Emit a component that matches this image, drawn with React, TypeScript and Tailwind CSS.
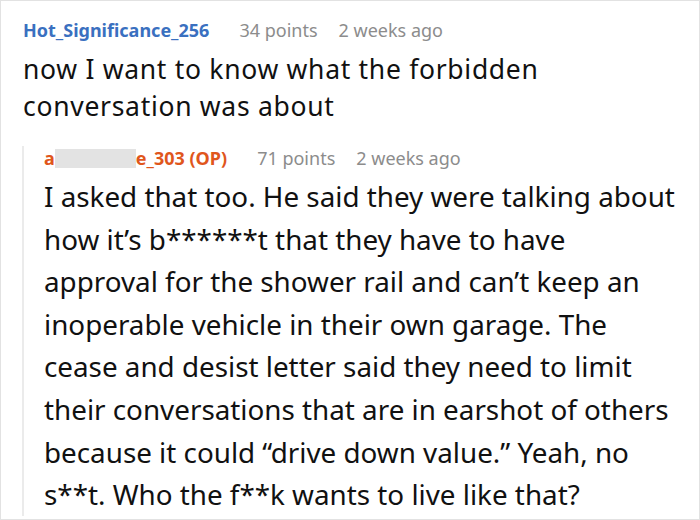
export default function App() {
  return (
    <div className="w-[700px] h-[520px] bg-white border border-[#e2e2e2] overflow-hidden" style={{ fontFamily: '"Noto Sans", sans-serif' }}>
      <div className="pl-[22px] pt-[17px]">
        <div className="flex items-baseline text-[18px] leading-[24px] whitespace-nowrap">
          <span className="font-bold text-[#3a70c0]">Hot_Significance_256</span>
          <span className="ml-[30px] text-[#8c8c8c]">34 points</span>
          <span className="ml-[21px] text-[#8c8c8c]">2 weeks ago</span>
        </div>
        <p className="text-[26.5px] leading-[37px] tracking-[0.7px] text-[#111] mt-[9px] whitespace-nowrap">
          now I want to know what the forbidden
          <br />
          conversation was about
        </p>
      </div>
      <div className="ml-[21px] mt-[21px] border-l-2 border-[#ebebeb] pl-[20px]">
        <div className="flex items-baseline text-[18px] leading-[24px] whitespace-nowrap">
          <span className="font-bold text-[#e0561c] flex items-baseline">
            a
            <span className="inline-block w-[81px] h-[19px] bg-[#e3e3e3] self-center"></span>
            e_303 (OP)
          </span>
          <span className="ml-[30px] text-[#8c8c8c]">71 points</span>
          <span className="ml-[21px] text-[#8c8c8c]">2 weeks ago</span>
        </div>
        <p className="text-[27.8px] leading-[42.6px] text-[#111] mt-[5px] whitespace-nowrap">
          I asked that too. He said they were talking about
          <br />
          how it’s b******t that they have to have
          <br />
          approval for the shower rail and can’t keep an
          <br />
          inoperable vehicle in their own garage. The
          <br />
          cease and desist letter said they need to limit
          <br />
          their conversations that are in earshot of others
          <br />
          because it could “drive down value.” Yeah, no
          <br />
          s**t. Who the f**k wants to live like that?
        </p>
      </div>
    </div>
  )
}
